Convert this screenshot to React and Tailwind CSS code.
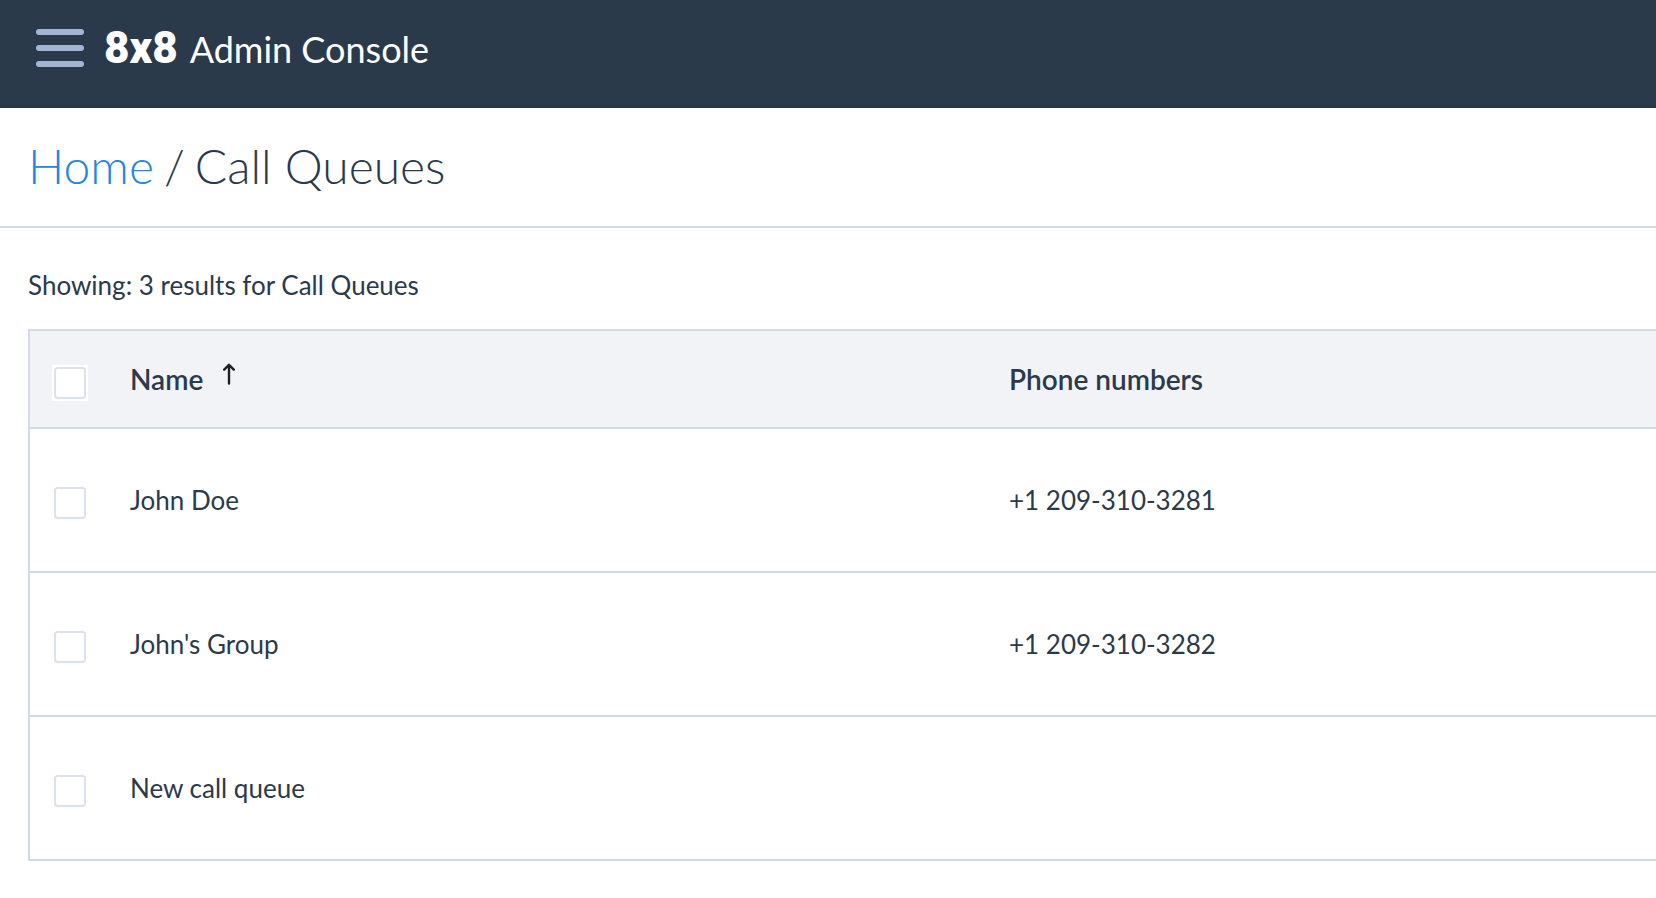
const queues = [
  { id: 1, name: 'John Doe', phone: '+1 209-310-3281' },
  { id: 2, name: "John's Group", phone: '+1 209-310-3282' },
  { id: 3, name: 'New call queue', phone: '' },
];

const MenuIcon = () => (
  <svg className="w-12 h-[38px]" viewBox="0 0 48 38" fill="#a3b5d3">
    <rect x="0" y="0" width="48" height="6" rx="3" />
    <rect x="0" y="16" width="48" height="6" rx="3" />
    <rect x="0" y="32" width="48" height="6" rx="3" />
  </svg>
);

const SortIcon = () => (
  <svg
    className="w-3 h-6"
    viewBox="0 0 12 24"
    fill="none"
    stroke="#1c2126"
    strokeWidth="2.4"
    strokeLinecap="round"
    strokeLinejoin="round"
  >
    <path d="M6 22.6V4M1.2 8.6L6 3.8l4.8 4.8" />
  </svg>
);

const Checkbox = ({ label }) => (
  <input
    type="checkbox"
    aria-label={label}
    className="block w-8 h-8 appearance-none rounded-sm border-2 border-[#dbe2ef] bg-white checked:bg-[#2586e2]"
  />
);

const Header = () => (
  <header className="flex items-start gap-5 h-[108px] pl-9 bg-[#2b3a4a] border-b-2 border-[#2b3748] text-white">
    <button type="button" aria-label="Open menu" className="mt-[29px]">
      <MenuIcon />
    </button>
    <div className="flex items-baseline gap-3 pt-[22px]">
      <span className="font-['Roboto',sans-serif] text-[44px] leading-[52px] font-black">8x8</span>
      <span className="text-4xl leading-[52px] font-normal">Admin Console</span>
    </div>
  </header>
);

const Breadcrumb = () => (
  <nav className="px-7 pt-[26px] pb-7 border-b-2 border-[#d1d9e6]">
    <h1 className="flex gap-2.5 text-5xl leading-[64px] font-light">
      <a href="#home" className="text-[#2586e2]">Home</a>
      <span>/</span>
      <span>Call Queues</span>
    </h1>
  </nav>
);

const QueueTable = () => (
  <table className="w-full table-fixed border-collapse border-2 border-r-0 border-[#d1dae7] text-left">
    <thead>
      <tr className="h-[98px] bg-[#f1f3f7] border-b-2 border-[#d1dae7]">
        <th className="w-[101px] pl-[22px]">
          <div className="w-9 h-9 p-0.5 mt-2 bg-white">
            <Checkbox label="Select all call queues" />
          </div>
        </th>
        <th className="text-[28px] leading-9 font-semibold">
          <div className="flex items-start gap-5">
            Name
            <SortIcon />
          </div>
        </th>
        <th className="w-[647px] text-[28px] leading-9 font-semibold">Phone numbers</th>
      </tr>
    </thead>
    <tbody>
      {queues.map((queue) => (
        <tr key={queue.id} className="h-36 border-b-2 border-[#d1dae7]">
          <td className="pl-6 pt-1.5">
            <Checkbox label={`Select ${queue.name}`} />
          </td>
          <td>{queue.name}</td>
          <td>{queue.phone}</td>
        </tr>
      ))}
    </tbody>
  </table>
);

const App = () => (
  <div className="min-h-screen bg-white overflow-x-hidden font-['Lato','Open_Sans',sans-serif] text-[26px] leading-9 text-[#2b3a4a]">
    <Header />
    <Breadcrumb />
    <main className="pl-7 pt-[39px]">
      <p className="mb-[26px]">Showing: 3 results for Call Queues</p>
      <QueueTable />
    </main>
  </div>
);

export default App;
